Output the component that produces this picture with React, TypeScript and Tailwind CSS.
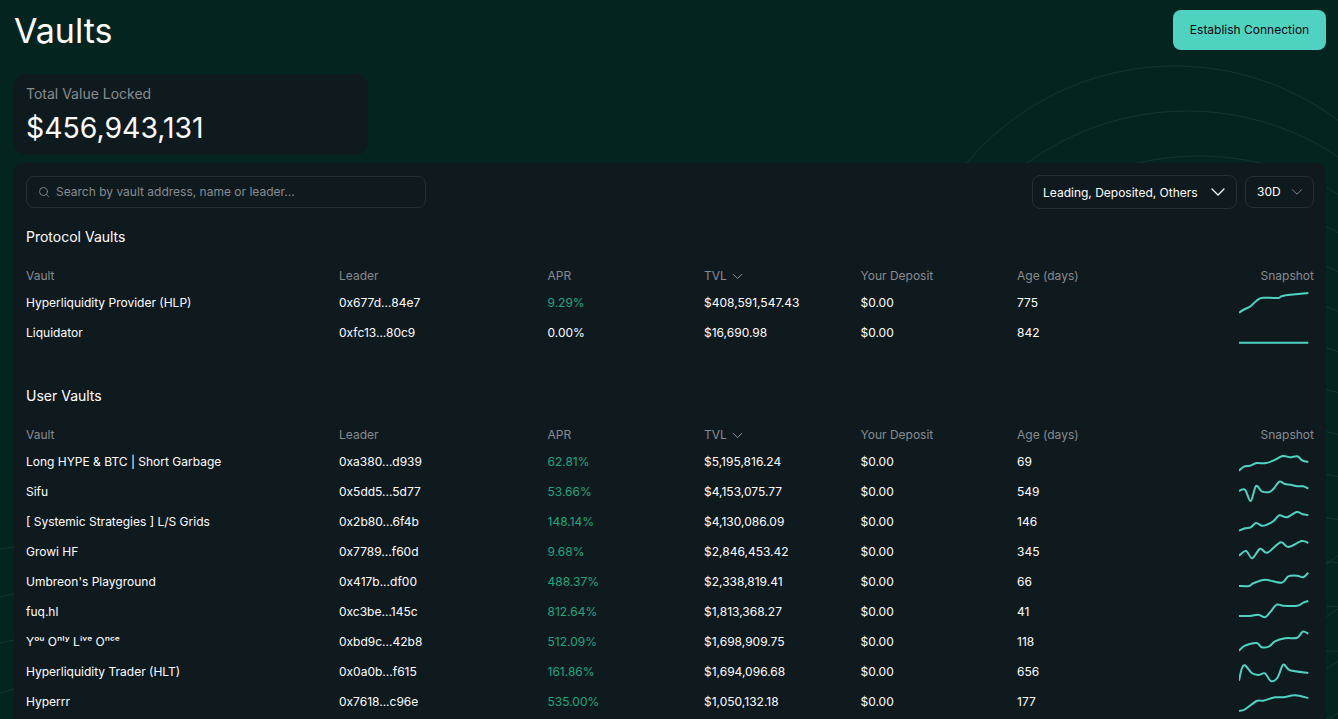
import { ChevronDown, Search } from 'lucide-react';

type Vault = { name: string; leader: string; apr: string; tvl: string; age: string; spark: string };

const protocolVaults: Vault[] = [
  { name: 'Hyperliquidity Provider (HLP)', leader: '0x677d...84e7', apr: '9.29%', tvl: '$408,591,547.43', age: '775', spark: '0,25.7 5,22.5 11,19.7 15,16 19.3,12.3 24.3,10.7 39.3,11 44.3,8.7 69.3,6' },
  { name: 'Liquidator', leader: '0xfc13...80c9', apr: '0.00%', tvl: '$16,690.98', age: '842', spark: '0,25.7 69.3,25.7' },
];

const userVaults: Vault[] = [
  { name: 'Long HYPE & BTC | Short Garbage', leader: '0xa380...d939', apr: '62.81%', tvl: '$5,195,816.24', age: '69', spark: '0,24.7 5,20.7 11,19.7 17.7,17 26,17.3 34.3,14.7 43.7,10 51,11.3 58.3,10.3 63.7,14.7 69.3,16' },
  { name: 'Sifu', leader: '0x5dd5...5d77', apr: '53.66%', tvl: '$4,153,075.77', age: '549', spark: '0,15 6,13.7 11.7,25 17,10 22.7,15.3 30.3,16 35,12.3 40.3,5.7 46,8 51.7,8.7 58.3,10.3 64.3,10.3 69.3,12.7' },
  { name: '[ Systemic Strategies ] L/S Grids', leader: '0x2b80...6f4b', apr: '148.14%', tvl: '$4,130,086.09', age: '146', spark: '0,24.7 6,22.3 11.7,21.3 17,17 22.7,19.7 27.7,18.7 34.3,15.3 40.3,9.3 47.7,11.3 57.7,6 63.7,8.3 69.3,9' },
  { name: 'Growi HF', leader: '0x7789...f60d', apr: '9.68%', tvl: '$2,846,453.42', age: '345', spark: '0,19.7 7,15 13.3,22.3 21,12.7 28.3,16.7 41.7,6.3 49.3,11 62.7,5 69.3,7' },
  { name: "Umbreon's Playground", leader: '0x417b...df00', apr: '488.37%', tvl: '$2,338,819.41', age: '66', spark: '0,20 10,20 14.3,17.3 26,13.7 42.7,16.7 49.3,10.3 58.3,9.7 64.3,11.3 69.3,6.7' },
  { name: 'fuq.hl', leader: '0xc3be...145c', apr: '812.64%', tvl: '$1,813,368.27', age: '41', spark: '0,20 11,20 19.3,18.7 26,21.3 31,16.3 37.7,8.7 44.3,9.7 58.3,9.7 64.3,6.7 69.3,5' },
  { name: 'Yᵒᵘ Oⁿˡʸ Lⁱᵛᵉ Oⁿᶜᵉ', leader: '0xbd9c...42b8', apr: '512.09%', tvl: '$1,698,909.75', age: '118', spark: '0,24.7 6,19.7 17.7,17 22.7,21.3 30.3,20.3 36,15.3 46,12.3 58.3,11.7 63.7,5.7 69.3,7.7' },
  { name: 'Hyperliquidity Trader (HLT)', leader: '0x0a0b...f615', apr: '161.86%', tvl: '$1,694,096.68', age: '656', spark: '0,24.7 2.7,13 6,9.3 12.7,17 19.3,19 26,17.3 31.7,25 38.3,22 44.3,8.7 51,14.3 69.3,17' },
  { name: 'Hyperrr', leader: '0x7618...c96e', apr: '535.00%', tvl: '$1,050,132.18', age: '177', spark: '0,25 6,23.3 17.7,15 24.3,14.7 36,11.3 44.3,11.3 56,9.3 69.3,12' },
];

const cols = 'grid grid-cols-[313px_208.5px_156.5px_156.5px_156.5px_156.5px_1fr] items-center';

// rings behind the page, each one shifted down and right from the last
const rings = Array.from({ length: 14 }, (_, n) => ({ cx: 1175 + 12 * n, cy: 338 + 45 * n }));

// soft curve through the sampled points
function smooth(points: string) {
  const p = points.split(' ').map((s) => s.split(',').map(Number));
  let d = `M${p[0][0]} ${p[0][1]}`;
  for (let i = 0; i < p.length - 1; i++) {
    const a = p[i - 1] ?? p[i];
    const b = p[i];
    const c = p[i + 1];
    const e = p[i + 2] ?? c;
    d += ` C${b[0] + (c[0] - a[0]) / 6} ${b[1] + (c[1] - a[1]) / 6} ${c[0] - (e[0] - b[0]) / 6} ${c[1] - (e[1] - b[1]) / 6} ${c[0]} ${c[1]}`;
  }
  return d;
}

function Spark({ points }: { points: string }) {
  return (
    <svg width="70" height="30" viewBox="0 1 70 30" fill="none" className="mr-[5px]">
      <path d={smooth(points)} stroke="#50d2c1" strokeWidth="2" />
    </svg>
  );
}

function VaultTable({ title, vaults, className }: { title: string; vaults: Vault[]; className: string }) {
  return (
    <section className={className}>
      <h2 className="h-[22px] text-sm leading-[22px] font-normal text-white">{title}</h2>
      <div className={`${cols} mt-[16px] h-[24px] text-xs text-[#878c8f]`}>
        <div>Vault</div>
        <div>Leader</div>
        <div>APR</div>
        <div className="flex items-center gap-[2px]">
          TVL
          <ChevronDown size={17} strokeWidth={1.25} className="text-[#a0a4a6]" />
        </div>
        <div>Your Deposit</div>
        <div>Age (days)</div>
        <div className="text-right">Snapshot</div>
      </div>
      {vaults.map((v) => (
        <div key={v.name} className={`${cols} h-[30px] text-xs text-white`}>
          <div>{v.name}</div>
          <div>{v.leader}</div>
          <div className={v.apr === '0.00%' ? 'text-white' : 'text-[#1fa67d]'}>{v.apr}</div>
          <div>{v.tvl}</div>
          <div>$0.00</div>
          <div>{v.age}</div>
          <div className="flex justify-end">
            <Spark points={v.spark} />
          </div>
        </div>
      ))}
    </section>
  );
}

export default function App() {
  return (
    <div className="relative h-screen overflow-hidden bg-[#04251f] pl-[14px] pr-[12px] pt-[10px] font-['Inter',sans-serif]">
      <svg className="absolute inset-0" width="1338" height="719" fill="none" stroke="#ffffff" strokeOpacity="0.07">
        {rings.map((r) => (
          <circle key={r.cy} cx={r.cx} cy={r.cy} r="272" />
        ))}
        <path d="M0 549 L14 547 M0 597 L14 594 M0 643 L14 640 M0 693 L14 689" />
      </svg>

      <div className="relative">
        <header className="flex h-[40px] items-center justify-between">
          <h1 className="mt-[2px] text-[34px] leading-[40px] font-normal text-white">Vaults</h1>
          <button className="h-[40px] w-[153px] rounded-lg bg-[#50d2c1] text-xs text-[#04060c]">Establish Connection</button>
        </header>

        <div className="mt-[24px] h-[81px] w-[354px] rounded-xl bg-[#0f1a1f] px-[12px] pt-[10px]">
          <div className="text-sm leading-5 text-[#878c8f]">Total Value Locked</div>
          <div className="mt-[6px] text-[28.4px] leading-9 text-white">$456,943,131</div>
        </div>

        <main className="mt-[8px] h-[600px] rounded-t-lg bg-[#0f1a1f] px-[12px] pt-[12px]">
          <div className="flex items-start justify-between">
            <div className="mt-[1px] flex h-[32px] w-[400px] items-center gap-[6px] rounded-lg border border-[#273035] pl-[11px] text-xs text-[#878c8f]">
              <Search size={12} strokeWidth={1.75} />
              Search by vault address, name or leader...
            </div>
            <div className="flex gap-[8px]">
              <div className="flex h-[34px] w-[205px] items-center justify-between rounded-lg border border-[#273035] pl-[10px] pr-[6px] text-xs text-white">
                <span className="pt-px">Leading, Deposited, Others</span>
                <ChevronDown size={24} strokeWidth={1.25} />
              </div>
              <div className="mt-[1px] flex h-[32px] w-[69px] items-center justify-between rounded-lg border border-[#273035] pl-[11px] pr-[7px] text-xs text-white">
                30D
                <ChevronDown size={18} strokeWidth={1.25} className="text-[#878c8f]" />
              </div>
            </div>
          </div>

          <VaultTable title="Protocol Vaults" vaults={protocolVaults} className="mt-[17px]" />
          <VaultTable title="User Vaults" vaults={userVaults} className="mt-[37px]" />
        </main>
      </div>
    </div>
  );
}
